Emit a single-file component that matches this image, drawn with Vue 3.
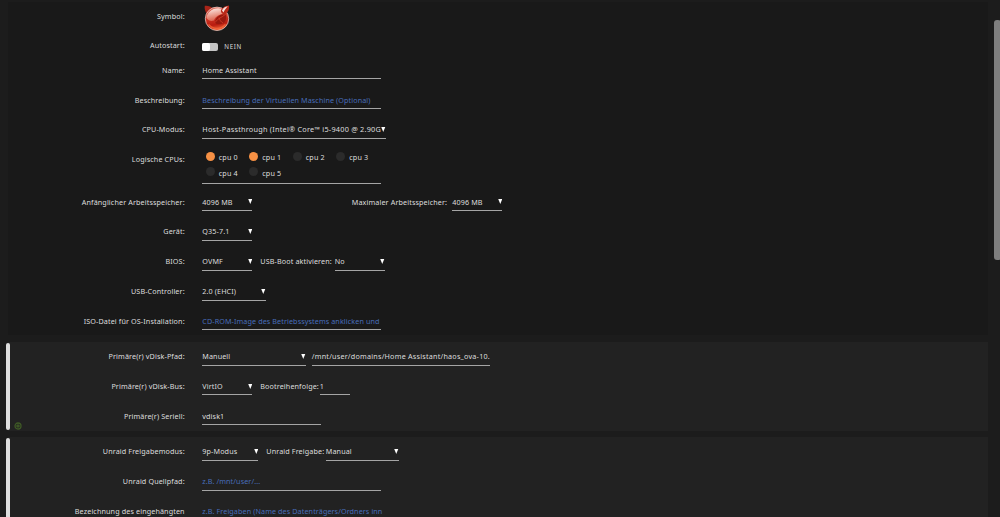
<template>
  <div class="page">
    <section v-for="panel in panels" :key="panel.id" class="panel" :class="panel.id">
      <span v-if="panel.removable" class="handle"></span>
      <div v-for="row in panel.rows" :key="row.label" class="row" :class="row.type">
        <label class="title">{{ row.label }}</label>

        <!-- VM icon -->
        <svg v-if="row.type === 'icon'" class="logo" viewBox="0 0 26 26">
          <defs>
            <linearGradient id="ball" x1="0.3" y1="0" x2="0.5" y2="1">
              <stop offset="0" stop-color="#e06a58" />
              <stop offset="0.45" stop-color="#cc3524" />
              <stop offset="0.75" stop-color="#b81c10" />
              <stop offset="1" stop-color="#f06a3c" />
            </linearGradient>
            <linearGradient id="shine" x1="0" y1="0" x2="0.3" y2="1">
              <stop offset="0" stop-color="#fff" stop-opacity=".95" />
              <stop offset="1" stop-color="#f4a890" stop-opacity=".45" />
            </linearGradient>
          </defs>
          <path d="M.8 .8C4 .4 7 1.4 8.6 3.2L3.2 9.5C1.3 7 .2 3.5 .8 .8z" fill="#a82418" />
          <circle cx="13" cy="13.8" r="11.7" fill="url(#ball)" stroke="#f1d9d2" stroke-width=".7" />
          <path d="M2.5 13C3 7.5 8 3 14.5 3.2C18 3.5 19.5 5.5 21 8.5C15 9 11.5 11.5 10 15.5C7.5 16.5 4.5 16 2.5 13z" fill="url(#shine)" />
          <path d="M11 17.5C11.5 12 16 9 21.5 9.3C23.5 13.5 21 18.8 16.5 19.3C13.5 19.5 12 19 11 17.5z" fill="#98180e" />
          <path d="M11 17.5C14 13 18 12.5 21.5 9.3M15 12.5C15.5 15 17 17 19 18" fill="none" stroke="#d8442c" stroke-width=".7" />
          <path d="M4.5 19.5C9 24.8 17 24.8 21.5 19.5" fill="none" stroke="#f8683a" stroke-width="1.6" opacity=".7" />
          <path d="M16.8 5.8C18 2.5 21.5 .8 25 .6C25.7 4.5 23.5 8.3 20.5 9.6C18.2 9 17 7.7 16.8 5.8z" fill="#b82818" />
          <path d="M18 5.5C19 3 21.5 1.5 23.8 1.2C22 3 20.5 5 19.5 7.5z" fill="#fff" opacity=".85" />
        </svg>

        <div v-else-if="row.type === 'autostart'" class="switch">
          <span class="track"><span class="knob"></span></span>
          <span class="state">NEIN</span>
        </div>

        <div v-else-if="row.type === 'cpus'" class="cpu-list">
          <span v-for="n in 6" :key="n" class="cpu">
            <i class="dot" :class="{ on: n <= 2 }"></i>cpu {{ n - 1 }}
          </span>
        </div>

        <div v-else class="fields">
          <template v-for="(field, i) in row.fields" :key="i">
            <span v-if="field.label" class="inline-label" :style="{ width: field.labelWidth + 'px', marginLeft: field.gap + 'px' }">{{ field.label }}</span>
            <div
              class="control"
              :class="[field.kind, { placeholder: field.placeholder }]"
              :style="{ width: field.width + 'px', marginLeft: field.label ? 0 : (field.gap || 0) + 'px' }"
            >
              <span class="value">{{ field.value }}</span>
              <svg v-if="field.select" class="arrow" viewBox="0 0 4 5"><path d="M0 0h4L2 5z" /></svg>
            </div>
          </template>
        </div>
      </div>
      <svg v-if="panel.id === 'disk'" class="add" viewBox="0 0 8 8">
        <circle cx="4" cy="4" r="3" />
        <path d="M4 2.2v3.6M2.2 4h3.6" />
      </svg>
    </section>
    <div class="scrollbar"></div>
  </div>
</template>

<script setup>
const panels = [
  {
    id: 'main',
    rows: [
      { label: 'Symbol:', type: 'icon' },
      { label: 'Autostart:', type: 'autostart' },
      { label: 'Name:', fields: [{ value: 'Home Assistant', width: 178.5 }] },
      { label: 'Beschreibung:', fields: [{ value: 'Beschreibung der Virtuellen Maschine (Optional)', width: 178.5, placeholder: true }] },
      { label: 'CPU-Modus:', fields: [{ value: 'Host-Passthrough (Intel® Core™ i5-9400 @ 2.90G', width: 183.5, select: true, kind: 'cpu-mode' }] },
      { label: 'Logische CPUs:', type: 'cpus' },
      {
        label: 'Anfänglicher Arbeitsspeicher:',
        fields: [
          { value: '4096 MB', width: 50, select: true },
          { label: 'Maximaler Arbeitsspeicher:', labelWidth: 100.5, gap: 99.5, value: '4096 MB', width: 50, select: true }
        ]
      },
      { label: 'Gerät:', fields: [{ value: 'Q35-7.1', width: 50, select: true }] },
      {
        label: 'BIOS:',
        fields: [
          { value: 'OVMF', width: 50, select: true },
          { label: 'USB-Boot aktivieren:', labelWidth: 74.5, gap: 8, value: 'No', width: 50, select: true }
        ]
      },
      { label: 'USB-Controller:', fields: [{ value: '2.0 (EHCI)', width: 63.5, select: true }] },
      { label: 'ISO-Datei für OS-Installation:', fields: [{ value: 'CD-ROM-Image des Betriebssystems anklicken und', width: 178.5, placeholder: true }] }
    ]
  },
  {
    id: 'disk',
    removable: true,
    rows: [
      {
        label: 'Primäre(r) vDisk-Pfad:',
        fields: [
          { value: 'Manuell', width: 103.5, select: true },
          { value: '/mnt/user/domains/Home Assistant/haos_ova-10.', width: 178.5, gap: 6, kind: 'path' }
        ]
      },
      {
        label: 'Primäre(r) vDisk-Bus:',
        fields: [
          { value: 'VirtIO', width: 50, select: true },
          { label: 'Bootreihenfolge:', labelWidth: 59.5, gap: 8, value: '1', width: 30 }
        ]
      },
      { label: 'Primäre(r) Seriell:', fields: [{ value: 'vdisk1', width: 119 }] }
    ]
  },
  {
    id: 'share',
    removable: true,
    rows: [
      {
        label: 'Unraid Freigabemodus:',
        fields: [
          { value: '9p-Modus', width: 56, select: true },
          { label: 'Unraid Freigabe:', labelWidth: 59.5, gap: 8, value: 'Manual', width: 73, select: true }
        ]
      },
      { label: 'Unraid Quellpfad:', fields: [{ value: 'z.B. /mnt/user/...', width: 178.5, placeholder: true }] },
      { label: 'Bezeichnung des eingehängten', fields: [{ value: 'z.B. Freigaben (Name des Datenträgers/Ordners inn', width: 178.5, placeholder: true }] }
    ]
  }
]
</script>

<style>
body {
  margin: 0;
  background: #1c1c1c;
}
</style>

<style scoped>
.page {
  position: relative;
  box-sizing: border-box;
  height: 517px;
  padding: 2px 12px 0 8px;
  overflow: hidden;
  background: #1c1c1c;
  color: #dedede;
  font-family: 'Noto Sans', sans-serif;
  font-size: 7.2px;
  line-height: 14px;
  letter-spacing: 0.12px;
  white-space: nowrap;
}
.panel {
  position: relative;
  box-sizing: border-box;
  background: #222;
}
.main {
  height: 333px;
  padding-top: 7.2px;
  margin-bottom: 7px;
  background: #191919;
}
.disk {
  height: 89px;
  padding-top: 7.2px;
  margin-bottom: 6px;
}
.share {
  height: 100px;
  padding-top: 7.4px;
}
.handle {
  position: absolute;
  left: -2px;
  top: 1px;
  bottom: 1px;
  width: 4px;
  border-radius: 2px;
  background: #dedede;
}
.row {
  display: flex;
  align-items: flex-start;
  height: 29.85px;
}
.row.icon {
  height: 29px;
}
.row.autostart {
  height: 24.5px;
}
.row.cpus {
  height: 42.4px;
}
.title {
  width: 176.7px;
  margin-right: 17.6px;
  text-align: right;
  flex-shrink: 0;
}
.logo {
  width: 26px;
  height: 26px;
  margin: -4px 0 0 1.5px;
}
.switch {
  display: flex;
}
.track {
  width: 16px;
  height: 8px;
  margin: 4.8px 6px 0 0;
  border-radius: 2px;
  background: #c4c4c4;
}
.knob {
  display: block;
  width: 8px;
  height: 8px;
  border-radius: 2px;
  background: #fff;
}
.state {
  margin-top: 2px;
  font-size: 6.2px;
  letter-spacing: 0.7px;
}
.fields {
  display: flex;
}
.control {
  display: flex;
  box-sizing: border-box;
  height: 16.4px;
  border-bottom: 1px solid #a5a5a5;
}
.value {
  flex: 1;
  min-width: 0;
  height: 15px;
}
.placeholder {
  color: #486dba;
  letter-spacing: 0.1px;
}
.path {
  letter-spacing: 0.23px;
}
.cpu-mode {
  font-size: 7.3px;
  letter-spacing: 0.23px;
}
.arrow {
  width: 4.5px;
  height: 5px;
  margin-top: 4.8px;
  fill: #fff;
}
.cpu-list {
  display: flex;
  flex-wrap: wrap;
  align-content: flex-start;
  box-sizing: border-box;
  width: 178.5px;
  height: 31.4px;
  padding-left: 3.5px;
  border-bottom: 1px solid #a5a5a5;
}
.cpu {
  display: flex;
  width: 43.5px;
  height: 15.5px;
  line-height: 11.6px;
}
.dot {
  width: 9px;
  height: 9px;
  margin: -0.7px 4px 0 0;
  border-radius: 50%;
  background: #2b2b2b;
}
.dot.on {
  background: #f69044;
}
.add {
  position: absolute;
  left: 6px;
  top: 79.5px;
  width: 8px;
  height: 8px;
  fill: none;
  stroke: #3f5a26;
  stroke-width: 1.3;
}
.scrollbar {
  position: absolute;
  left: 994px;
  top: 20px;
  width: 7px;
  height: 240px;
  border-radius: 3px;
  background: #7e7e7e;
}
</style>
